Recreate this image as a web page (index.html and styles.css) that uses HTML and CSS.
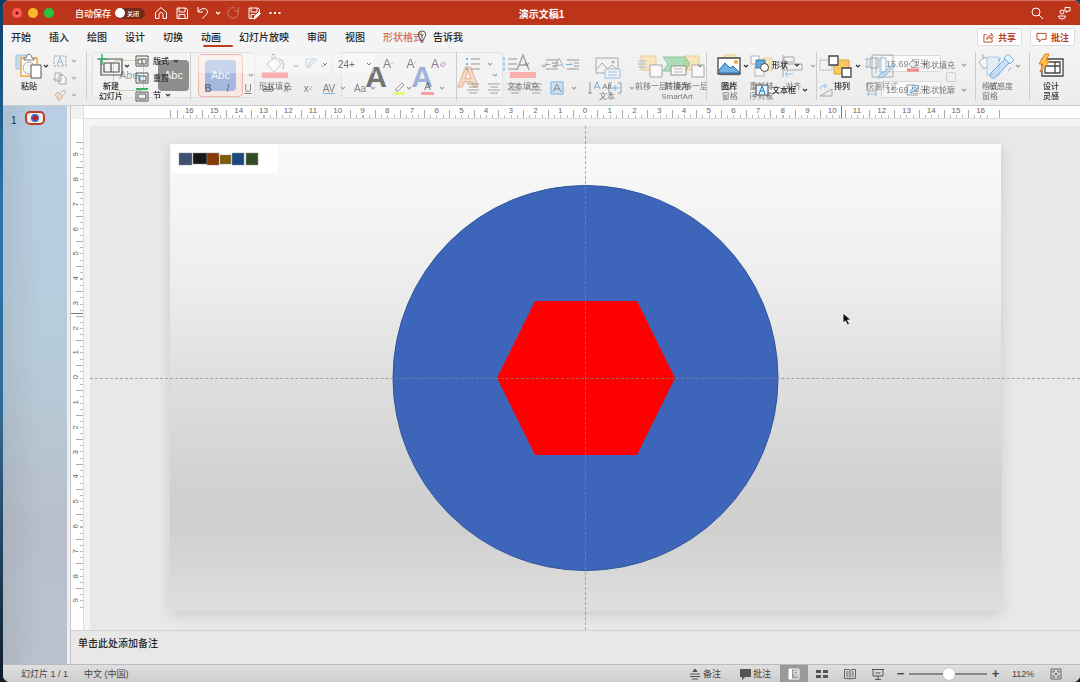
FILE: index.html
```html
<!DOCTYPE html>
<html lang="zh-CN">
<head>
<meta charset="utf-8">
<title>演示文稿1</title>
<link rel="stylesheet" href="styles.css">
</head>
<body>
<svg class="defs" aria-hidden="true">
  <symbol id="chev" viewBox="0 0 6 6"><path d="M1 2l2 2 2-2" fill="none" stroke="currentColor" stroke-width="1.2"/></symbol>
  <symbol id="lines" viewBox="0 0 14 14"><path d="M1 3h12M3 6h8M1 9h12M3 12h8" stroke="#777" fill="none"/></symbol>
  <symbol id="bucket" viewBox="0 0 28 26"><path d="M6 11l8-7 6 7-7 8zM11 7V2q1-2 3 0v5" fill="#fff" stroke="#777"/><path d="M18 6q6 1 4 10" fill="none" stroke="#6aa5d4" stroke-width="2"/><path d="M1 19h26v6H1z" fill="#ff8080"/></symbol>
</svg>
<div class="window">
  <header class="titlebar">
    <div class="lights"><button class="light red" aria-label="关闭"></button><button class="light yellow" aria-label="最小化"></button><button class="light green" aria-label="缩放"></button></div>
    <label class="autosave">自动保存 <input type="checkbox" class="hidden-check"><span class="toggle"><i></i>关闭</span></label>
    <div class="quick">
      <button aria-label="主页"><svg viewBox="0 0 14 14"><path d="M1.500 6.500L7 1.500l5.500 5v6H9V8.500a2 2 0 0 0-4 0v4H1.500z"/></svg></button>
      <button aria-label="保存"><svg viewBox="0 0 14 14"><path d="M2 2h9l1.500 1.500V12.500H2zM4 2v4h6V2M4 12.500V8.500h6v4"/></svg></button>
      <button aria-label="撤销"><svg viewBox="0 0 14 14"><path d="M2 1v5h5M2 6c3-5 10-4 9.500 0 0 2-2 3-5 6.500"/></svg></button>
      <button class="narrow" aria-label="撤销选项"><svg viewBox="0 0 6 6"><use href="#chev"/></svg></button>
      <button class="dim" aria-label="恢复"><svg viewBox="0 0 14 14"><path d="M9 2a5.300 5.300 0 1 0 3 3M12.500 1v4h-4"/></svg></button>
      <button aria-label="另存为"><svg viewBox="0 0 14 14"><path d="M7 12.500H2V2h9l1.500 1.500V6M4 2v4h6V2M4 12V8.500h4"/><path d="M7 13l1-3 4-4 1.500 1.500-4 4z" fill="#fff"/></svg></button>
      <button aria-label="更多"><svg viewBox="0 0 14 14"><path d="M1.500 7h2M6 7h2M10.500 7h2" stroke-width="2"/></svg></button>
    </div>
    <h1>演示文稿1</h1>
    <div class="quick right">
      <button aria-label="搜索"><svg viewBox="0 0 14 14"><circle cx="6" cy="6" r="4"/><path d="M9 9l4 4"/></svg></button>
      <button aria-label="共同创作"><svg viewBox="0 0 14 14"><circle cx="5" cy="6" r="2"/><path d="M1.500 10h7q0 3-3.500 3t-3.500-3zM8 1.500h5v3.500h-2L9.500 6.500V5H8z"/></svg></button>
    </div>
  </header>

  <nav class="tabs">
    <button>开始</button><button>插入</button><button>绘图</button><button>设计</button><button>切换</button><button class="active">动画</button><button>幻灯片放映</button><button>审阅</button><button>视图</button><button class="context">形状格式</button>
    <button class="tell"><svg viewBox="0 0 10 14"><path d="M3 9q-2-2-2-4a4 4 0 0 1 8 0q0 2-2 4v2H3zM3.500 13h3M5 9V6M3.500 5L5 6l1.500-1" fill="none" stroke="#444"/></svg>告诉我</button>
    <div class="tab-actions">
      <button><svg viewBox="0 0 12 12"><path d="M4 3H1v8h9V8M4 8q0-4 5-4V1.500L11.500 5 9 8V6Q6 6 4 8z"/></svg>共享</button>
      <button><svg viewBox="0 0 12 12"><path d="M1 1.500h10V8H6l-2.500 3V8H1z"/></svg>批注</button>
    </div>
  </nav>

  <section class="ribbon" aria-label="功能区">
    <div class="layer format">
      <div class="gallery shapes">
        <button class="outline">Abc</button><button class="grey">Abc</button><button class="chosen"><span>Abc</span></button>
        <svg class="chev"><use href="#chev"/></svg>
      </div>
      <div class="fill-group">
        <button class="big"><svg class="w28"><use href="#bucket"/></svg><span>形状填充</span></button>
        <svg class="chev"><use href="#chev"/></svg>
        <button class="mini" aria-label="形状轮廓"><svg viewBox="0 0 14 14"><path d="M2 3h8M2 3v8h5" fill="none" stroke="#888"/><path d="M4 10l1-3 6-5 2 2-6 5z" fill="#cfe4f5" stroke="#6aa5d4"/></svg></button>
        <svg class="chev"><use href="#chev"/></svg>
      </div>
      <div class="gallery words"><button class="k">A</button><button class="b">A</button><button class="o">A</button><svg class="chev"><use href="#chev"/></svg></div>
      <div class="fill-group text-fill">
        <button class="big"><svg class="w28" viewBox="0 0 28 26"><path d="M8 17L14 2l6 15M10.500 12h7" fill="none" stroke="#666" stroke-width="1.300"/><path d="M1 19h26v6H1z" fill="#ff8080"/></svg><span>文本填充</span></button>
        <svg class="chev"><use href="#chev"/></svg>
        <button class="mini" aria-label="文本轮廓"><svg viewBox="0 0 14 14"><path d="M2 12L7 2l5 10M4 9h6" fill="none" stroke="#888"/></svg></button>
      </div>
      <button class="big alt"><svg class="w28" viewBox="0 0 28 26"><path d="M3 5h22v15H3zM3 17l6-7 6 6 4-4 6 5" fill="#f4f4f4" stroke="#777"/><circle cx="20" cy="9" r="1.500" fill="#888"/><path d="M12 16h15v9H12z" fill="#eaf4fd" stroke="#6aa5d4"/><path d="M15 19h9M15 22h9" stroke="#6aa5d4"/></svg><span>Alt<br>文本</span></button>
      <div class="pair">
        <button class="big"><svg class="w28" viewBox="0 0 28 26"><path d="M4 3h15v14H4z" fill="#fbdc9b" stroke="#e8b75a"/><path d="M13 12h12v12H13z" fill="#fff" stroke="#777"/><path d="M1 8h8M1 11h8M1 14h8" stroke="#5b9bd5"/></svg><span>前移一层</span></button>
        <button class="big"><svg class="w28" viewBox="0 0 28 26"><path d="M6 3h15v14H6z" fill="#fbdc9b" stroke="#e8b75a"/><path d="M14 12h12v12H14z" fill="#fff" stroke="#777"/></svg><span>后移一层</span></button>
      </div>
      <div class="pair three">
        <button class="big"><svg class="w28" viewBox="0 0 28 26"><path d="M8 2h12v7H8z" fill="#fbdc9b" stroke="#e8b75a"/><path d="M5 9h18v13H5z" fill="none" stroke="#888"/><path d="M13 13l7 6h-4l-2 3z" fill="#fff" stroke="#777"/></svg><span>选择<br>窗格</span></button>
        <button class="big"><svg class="w28" viewBox="0 0 28 26"><path d="M3 3h8v8H3zM7 14h9v9H7z" fill="#fff" stroke="#888"/><path d="M15 5h9v12h-9z" fill="#fbdc9b" stroke="#e8b75a"/></svg><span>重新排<br>序对象</span></button>
        <button class="big"><svg class="w28" viewBox="0 0 28 26"><path d="M4 2v22M5 4h10v5H5zM5 11h18v6H5z" fill="none" stroke="#777"/><path d="M14 21H6m3-3l-3 3 3 3" fill="none" stroke="#5b9bd5"/></svg><span>对齐</span></button>
        <svg class="chev"><use href="#chev"/></svg>
      </div>
      <div class="stack rotate">
        <button class="mini" aria-label="组合"><svg viewBox="0 0 14 14"><path d="M1 2h12v10H1z" fill="none" stroke="#888" stroke-dasharray="2 1"/></svg></button>
        <button class="mini" aria-label="旋转"><svg viewBox="0 0 14 14"><path d="M1 13h12V6z" fill="none" stroke="#777"/><path d="M1 6q1-4 6-3M5 1l3 2-3 2" fill="none" stroke="#5b9bd5"/></svg></button>
      </div>
      <div class="sizes">
        <label><svg viewBox="0 0 14 14"><path d="M5 2h8v10H5z" fill="none" stroke="#777"/><path d="M2 2v10M0 4l2-2 2 2M0 10l2 2 2-2" fill="none" stroke="#5b9bd5"/></svg><input value="15.69 厘米" aria-label="高度"></label>
        <label><svg viewBox="0 0 14 14"><path d="M2 1h10v8H2z" fill="none" stroke="#777"/><path d="M2 12h10M4 10l-2 2 2 2M10 10l2 2-2 2" fill="none" stroke="#5b9bd5"/></svg><input value="15.69 厘米" aria-label="宽度"></label>
        <input type="checkbox" aria-label="锁定纵横比">
      </div>
      <button class="big pane"><svg class="w28" viewBox="0 0 28 26"><path d="M3 9l6-5 5 6-6 6zM7 6V1" fill="#fff" stroke="#777"/><path d="M11 4h12v18H11z" fill="#dcebf7" stroke="#79afd9"/></svg><span>格式<br>窗格</span></button>
    </div>

    <div class="layer home">
      <div class="group clipboard">
        <button class="big strong"><svg class="w28" viewBox="0 0 28 26"><path d="M1 2h12v14H1z" fill="#c4dbef" stroke="#9dc3e3"/><path d="M6 5h16v18H6z" fill="#fff" stroke="#f0a63c" stroke-width="1.500"/><path d="M9 7V5h2q1-4 3-4t3 4h2v2z" fill="#fff" stroke="#777"/><circle cx="14" cy="15" r="6" fill="#f7f7f7" stroke="#aaa"/><path d="M16 12h10v13H16z" fill="#fff" stroke="#555"/></svg><span>粘贴</span></button>
        <svg class="chev dark"><use href="#chev"/></svg>
        <div class="triple faded">
          <button><svg viewBox="0 0 14 14"><path d="M1 2h12v10H1z" fill="none" stroke="#777" stroke-dasharray="3 1"/><path d="M4 11L7 3l3 8M5 8h4" stroke="#3b91d4" fill="none"/></svg><svg class="chev"><use href="#chev"/></svg></button>
          <button><svg viewBox="0 0 14 14"><path d="M2 2h6v8H2zM6 4h4l3 3v6H6z" fill="#fff" stroke="#666"/><path d="M0 8h5" stroke="#3b91d4"/></svg><svg class="chev"><use href="#chev"/></svg></button>
          <button><svg viewBox="0 0 14 14"><path d="M2 7l3-3 5 5-4 4z" fill="#f6c69b" stroke="#b9845d"/><path d="M7 6l4-4 2 2-4 4" fill="#fff" stroke="#777"/></svg><svg class="chev"><use href="#chev"/></svg></button>
        </div>
      </div>
      <div class="group slides">
        <button class="big strong"><svg class="w28" viewBox="0 0 28 26"><path d="M4 6h21v16H4zM7 10h15v9H7zM14 10v9" fill="none" stroke="#555" stroke-width="1.200"/><path d="M5 1v11M0 6h11" stroke="#35b565" stroke-width="1.500"/></svg><span>新建<br>幻灯片</span></button>
        <svg class="chev dark"><use href="#chev"/></svg>
        <div class="triple strong">
          <button><svg viewBox="0 0 14 14"><path d="M1 2h12v10H1zM3 5h8v5H3zM7 5v5" fill="none" stroke="#555"/></svg>版式<svg class="chev"><use href="#chev"/></svg></button>
          <button><svg viewBox="0 0 14 14"><path d="M1 2h12v10H1zM4 5h7v5H4z" fill="none" stroke="#555"/><path d="M5 9V5q-4-2-4 1" fill="none" stroke="#3b91d4"/></svg>重置</button>
          <button><svg viewBox="0 0 14 14"><path d="M1 1h12" stroke="#35b565" stroke-width="2"/><path d="M1 4h12v9H1zM3 6h8v5H3z" fill="none" stroke="#555"/></svg>节<svg class="chev"><use href="#chev"/></svg></button>
        </div>
      </div>
      <div class="group font faded">
        <div class="row">
          <select class="face" aria-label="字体"><option></option></select>
          <select class="size" aria-label="字号"><option>24+</option></select>
          <button>A<sup>^</sup></button><button>A<sup>ˇ</sup></button><button class="clear">A<svg viewBox="0 0 8 8"><path d="M1 5l3-3 3 2-3 3z" fill="#efd6f6" stroke="#b264c8"/></svg></button>
        </div>
        <div class="row">
          <button><b>B</b></button><button><i>I</i></button><button><u>U</u></button><button><s>ab</s></button><button>x<sup>2</sup></button><button>x<sub>2</sub></button>
          <button class="av">AV</button><svg class="chev"><use href="#chev"/></svg><button>Aa</button><svg class="chev"><use href="#chev"/></svg>
          <button class="marker" aria-label="突出显示"><svg class="w14" viewBox="0 0 14 14"><path d="M4 8l6-6 2 2-6 6H4z" fill="#fff" stroke="#666"/><path d="M1 12.500h12" stroke="#f1f143" stroke-width="3"/></svg></button><svg class="chev"><use href="#chev"/></svg>
          <button class="color">A</button><svg class="chev"><use href="#chev"/></svg>
        </div>
      </div>
      <div class="group paragraph faded">
        <div class="row">
          <button aria-label="项目符号"><svg class="w14" viewBox="0 0 14 14"><path d="M5 2h9M5 7h9M5 12h9" stroke="#666"/><path d="M0 2h2M0 7h2M0 12h2" stroke="#3b91d4" stroke-width="2"/></svg></button><svg class="chev"><use href="#chev"/></svg>
          <button aria-label="编号"><svg class="w14" viewBox="0 0 14 14"><path d="M5 2h9M5 7h9M5 12h9" stroke="#666"/><path d="M1 0v4M1 5v4M1 10v4" stroke="#3b91d4"/></svg></button><svg class="chev"><use href="#chev"/></svg>
          <button class="indent" aria-label="减少缩进"><svg class="w14" viewBox="0 0 14 14"><path d="M1 3h12M7 6h6M7 9h6M1 12h12" stroke="#666"/><path d="M5 7.500H0l2-2" fill="none" stroke="#3b91d4"/></svg></button>
          <button aria-label="增加缩进"><svg class="w14" viewBox="0 0 14 14"><path d="M1 3h12M8 6h5M8 9h5M1 12h12" stroke="#666"/><path d="M0 7.500h6l-2-2" fill="none" stroke="#3b91d4"/></svg></button>
        </div>
        <div class="row">
          <button aria-label="左对齐"><svg class="w14"><use href="#lines"/></svg></button><button aria-label="居中"><svg class="w14"><use href="#lines"/></svg></button><button aria-label="右对齐"><svg class="w14"><use href="#lines"/></svg></button><button aria-label="两端对齐"><svg class="w14"><use href="#lines"/></svg></button>
          <button aria-label="分散对齐"><svg class="w14" viewBox="0 0 14 14"><path d="M1 1h12v12H1z" fill="#b9d9f3" stroke="#3b91d4"/><path d="M3 11l4-8 4 8M4 8h6" fill="none" stroke="#555"/></svg></button><svg class="chev"><use href="#chev"/></svg>
          <button aria-label="文字方向"><svg class="w14" viewBox="0 0 14 14"><path d="M3 1v12M1 11l2 2 2-2" fill="none" stroke="#666"/><path d="M7 8l3-7 3 7M8 6h4" fill="none" stroke="#3b91d4"/></svg></button>
          <button aria-label="对齐文本"><svg class="w14" viewBox="0 0 14 14"><path d="M4 2H1v10h3M10 2h3v10h-3" fill="none" stroke="#666"/><path d="M3 7h8M7 4v6" stroke="#3b91d4"/></svg></button><svg class="chev"><use href="#chev"/></svg>
        </div>
      </div>
      <div class="group smart faded">
        <button class="big"><svg class="w38" viewBox="0 0 38 26"><path d="M5 4h22l5 7-5 7H5l5-7z" fill="#8fd3a0" stroke="#65b67a"/><path d="M13 13h15v9H13z" fill="#fff" stroke="#666"/><path d="M16 16h9M16 19h9" stroke="#999"/></svg><span><b>转换为</b><br>SmartArt</span></button>
        <svg class="chev"><use href="#chev"/></svg>
      </div>
      <div class="group insert strong">
        <button class="big"><svg class="w28" viewBox="0 0 28 26"><path d="M3 5h22v16H3z" fill="#fff" stroke="#444" stroke-width="1.300"/><path d="M4 17l6-7 5 5 3-2 7 7H4z" fill="#72afe2" stroke="#236fae"/><circle cx="21" cy="9" r="2" fill="#f3a536"/></svg><span>图片</span></button>
        <svg class="chev dark"><use href="#chev"/></svg>
        <div class="stack">
          <button class="item"><svg viewBox="0 0 14 14"><path d="M1 2h9v8H1z" fill="#67a6d9" stroke="#3b78aa"/><circle cx="9.500" cy="9.500" r="4" fill="#fff" stroke="#444"/></svg>形状<svg class="chev"><use href="#chev"/></svg></button>
          <button class="item"><svg viewBox="0 0 14 14"><path d="M1 2h12v10H1z" fill="#e2f1fd" stroke="#444"/><path d="M4 11l3-8 3 8M5 8h4" fill="none" stroke="#167ac6"/></svg>文本框<svg class="chev"><use href="#chev"/></svg></button>
        </div>
      </div>
      <div class="group drawing">
        <button class="big strong"><svg class="w28" viewBox="0 0 28 26"><path d="M6 7h15v14H6z" fill="#f9c860" stroke="#dca23c"/><path d="M1 3h9v9H1zM14 15h9v9h-9z" fill="#fff" stroke="#444" stroke-width="1.300"/></svg><span>排列</span></button>
        <svg class="chev dark"><use href="#chev"/></svg>
        <button class="big faded"><svg class="w28" viewBox="0 0 28 26"><path d="M4 2h21v22H4z" fill="none" stroke="#777"/><path d="M8 5v16M12 5h6v14h-6z" fill="none" stroke="#3b91d4"/><path d="M10 25q1-5 5-5l10-9 1 2-8 9q-2 3-8 3z" fill="#9dc8eb" stroke="#4384b5"/></svg><span>快速样式</span></button>
        <div class="stack fade-more">
          <button class="item"><svg viewBox="0 0 14 14"><path d="M3 6l4-4 4 4-4 4z" fill="#fff" stroke="#777"/><path d="M1 12h12" stroke="#ef5757" stroke-width="3"/></svg>形状填充<svg class="chev"><use href="#chev"/></svg></button>
          <button class="item"><svg viewBox="0 0 14 14"><path d="M1 2h8M1 2v10h11" fill="none" stroke="#777"/><path d="M4 10l1-3 6-5 2 2-6 5z" fill="#d2e7f8" stroke="#3b91d4"/></svg>形状轮廓<svg class="chev"><use href="#chev"/></svg></button>
        </div>
      </div>
      <div class="group sensitivity faded">
        <button class="big"><svg class="w28" viewBox="0 0 28 26"><path d="M4 20l14-14 4 4L9 24q-4 3-6-1z" fill="#b9d9f3" stroke="#3b91d4"/><path d="M17 5l4-4 6 6-4 4zM11 8l3-3M21 18l3-3" fill="#e7f3fc" stroke="#3b91d4"/></svg><span>敏感度</span></button>
        <svg class="chev"><use href="#chev"/></svg>
      </div>
      <div class="group designer strong">
        <button class="big"><svg class="w28" viewBox="0 0 28 26"><path d="M5 6h21v17H5zM8 9h15v11H8zM18 9v11M8 13h15" fill="#fff" stroke="#444" stroke-width="1.300"/><path d="M8 1L2 11h4l-3 8L13 8H9l3-7z" fill="#ffc54c" stroke="#e87a22"/></svg><span>设计<br>灵感</span></button>
      </div>
    </div>
  </section>

  <main class="workspace">
    <aside class="thumbs"><span>1</span><button class="thumb" aria-label="幻灯片 1"><svg viewBox="0 0 14 10"><circle cx="7" cy="5" r="4" fill="#3d65b9"/><path d="M5.500 3.500h3l1 1.500-1 1.500h-3l-1-1.500z" fill="red"/></svg></button></aside>
    <section class="editor">
      <div class="corner"></div>
      <div class="hruler" id="hruler"></div>
      <div class="vruler" id="vruler"></div>
      <div class="canvas">
        <svg class="slide" viewBox="0 0 831 467" role="img" aria-label="幻灯片">
          <path d="M2 1h106v28H2z" fill="#fff"/>
          <g stroke="#8a8f9a" stroke-width=".5"><path d="M9 9h13v12H9z" fill="#40506f"/><path d="M23 9h14v11H23z" fill="#181818"/><path d="M37 9h12v12H37z" fill="#853a08"/><path d="M50 11h11v9H50z" fill="#7d5d06"/><path d="M62 9h12v12H62z" fill="#1c497d"/><path d="M76 9h12v12H76z" fill="#314d22"/></g>
          <circle cx="415.500" cy="234" r="192.500" fill="#3d66bb" stroke="#2f5597"/>
          <path d="M365 157h102l38 77-38 77H365l-38-77z" fill="#f00"/>
        </svg>
        <div class="guide horizontal"></div><div class="guide vertical"></div>
        <svg class="pointer" viewBox="0 0 10 14"><path d="M1 1v10l2.500-2 2 4 2-1-2-4H9z" fill="#111" stroke="#fff" stroke-width=".8"/></svg>
      </div>
      <div class="notes">单击此处添加备注</div>
    </section>
  </main>

  <footer class="status">
    <span>幻灯片 1 / 1</span><span>中文 (中国)</span>
    <button class="first"><svg viewBox="0 0 12 12"><path d="M1 6h10M1 8.500h10M3 11h6M4 3.500h4L6 1z" stroke="#555" fill="#555"/></svg>备注</button>
    <button class="comments"><svg viewBox="0 0 12 12"><path d="M1 1h11v8H6l-3 3V9H1z" fill="#555"/></svg>批注</button>
    <button class="view on" aria-label="普通"><svg viewBox="0 0 12 12"><path d="M1 1h10v10H1z" fill="none" stroke="#fff"/><path d="M1 1h3v10H1z" fill="#fff"/><path d="M6 3h4v3H6zM6 8h4" fill="none" stroke="#fff"/></svg></button>
    <button class="view" aria-label="幻灯片浏览"><svg viewBox="0 0 12 12"><path d="M0 2h5v3H0zM7 2h5v3H7zM0 7h5v3H0zM7 7h5v3H7z" fill="#555"/></svg></button>
    <button class="view" aria-label="阅读视图"><svg viewBox="0 0 12 12"><path d="M6 2v9M.5 1.500H5L6 2.500l1-1h4.500v9H7l-1 1-1-1H.5zM2 4h2.500M2 6h2.500M2 8h2.500M7.500 4H10M7.500 6H10M7.500 8H10" fill="none" stroke="#666"/></svg></button>
    <button class="view" aria-label="幻灯片放映"><svg viewBox="0 0 12 12"><path d="M0 1.500h12M1 2v6h10V2M3.500 5h5M6 8v3M3 11.500h6" fill="none" stroke="#555"/></svg></button>
    <button class="step">−</button><input class="zoom" type="range" min="0" max="100" value="51" aria-label="缩放"><button class="step">+</button>
    <span class="percent">112%</span>
    <button class="fit" aria-label="适应窗口"><svg viewBox="0 0 12 12"><path d="M1 1h10v10H1zM3 5V3h2M7 3h2v2M9 7v2H7M5 9H3V7M5 5l2 2M7 5L5 7" fill="none" stroke="#666"/></svg></button>
  </footer>
</div>
<script src="ruler.js"></script>
</body>
</html>
```
FILE: styles.css
```css
* { box-sizing: border-box; }
body {
  margin: 0;
  height: 100vh;
  padding-left: 3px;
  overflow: hidden;
  background: linear-gradient(#0b3f66, #2c75ab 30%, #326b98 60%, #101c2b);
  font-family: "Liberation Sans", "Noto Sans CJK SC", sans-serif;
  font-size: 10px;
  color: #262626;
}
button { border: 0; padding: 0; margin: 0; background: none; font: inherit; color: inherit; display: flex; align-items: center; white-space: nowrap; }
.defs { position: absolute; width: 0; height: 0; }
.window { height: 100%; display: flex; flex-direction: column; border-radius: 7px; overflow: hidden; background: #e8e8e8; }

.titlebar { position: relative; flex: none; height: 25px; display: flex; align-items: center; padding: 0 9px; background: #bc351a; border-top: 1px solid #d27662; color: #fff; }
.lights { display: flex; gap: 6px; }
.light { width: 10px; height: 10px; border-radius: 50%; }
.red { background: radial-gradient(#701010 0 1px, #ff5c55 2px); }
.yellow { background: #fdb72b; }
.green { background: #28c33f; }
.autosave { display: flex; align-items: center; gap: 4px; margin-left: 21px; font-size: 9px; font-weight: 500; }
.hidden-check { position: absolute; opacity: 0; }
.toggle { display: flex; align-items: center; gap: 2px; width: 30px; height: 11px; border-radius: 6px; background: #75281b; font-size: 6px; }
.toggle i { width: 10px; height: 10px; border-radius: 50%; background: #fff; }
.quick { display: flex; align-items: center; gap: 7px; margin-left: 9px; }
.quick svg { width: 14px; height: 14px; fill: none; stroke: #fff; }
.quick .narrow { width: 6px; margin: 0 -2px; }
.quick .narrow svg { width: 6px; color: #fff; stroke: none; }
.quick .dim { opacity: .35; }
.quick.right { margin-left: auto; gap: 13px; }
h1 { position: absolute; left: 50%; transform: translateX(-50%); margin: 0; font-size: 10px; font-weight: 700; }

.tabs { flex: none; height: 25px; display: flex; gap: 18px; padding: 0 5px 0 8px; background: #f4f4f4; font-weight: 500; }
.tabs > button { position: relative; height: 22px; }
.tabs .active::after { content: ""; position: absolute; left: 2px; right: -12px; bottom: 0; height: 2px; border-radius: 1px; background: #bd3b20; }
.tabs .context { color: #d4705b; }
.tabs .tell { margin-left: -24px; gap: 6px; }
.tell svg { width: 10px; height: 13px; }
.tab-actions { display: flex; gap: 8px; margin: 3px 0 0 auto; }
.tab-actions button { gap: 4px; height: 18px; padding: 0 5px; border: 1px solid #ddd; border-radius: 2px; background: #fff; color: #b83c22; font-size: 9px; font-weight: 700; }
.tab-actions svg { width: 11px; height: 11px; fill: none; stroke: #b83c22; }

.ribbon { position: relative; flex: none; height: 56px; background: linear-gradient(#f3f3f3, #ececec); border-bottom: 1px solid #ccc; font-size: 8px; overflow: hidden; }
.layer { display: grid; height: 100%; padding-top: 2px; }
.home { position: relative; grid-template-columns: 84px 104px 266px 200px 50px 110px 159px 54px 1fr; }
.format { position: absolute; inset: 0; padding-left: 89px; grid-template-columns: 164px 85px 163px 84px 47px 80px 101px 47px 113px 54px; opacity: .6; }
.group { display: flex; align-items: flex-start; position: relative; }
.group:not(:last-child)::after { content: ""; position: absolute; right: 0; top: 0; height: 48px; border-right: 1px solid #ccc; }
.group.paragraph::after { display: none; }
.big { flex-direction: column; gap: 2px; line-height: 10px; text-align: center; align-self: flex-start; }
.w28 { width: 28px; height: 28px; }
.w38 { width: 38px; height: 28px; }
.w14 { width: 14px; height: 14px; }
.chev { flex: none; width: 6px; height: 6px; color: #777; }
.group > .chev, .fill-group > .chev, .pair > .chev { margin-top: 11px; }
.chev.dark, .strong .chev { color: #333; }
.strong { font-weight: 500; color: #2b2b2b; }
.faded, .fade-more { color: #444; }
.faded > * { opacity: .55; }
.faded > .row { opacity: .65; }
.fade-more > *, .sensitivity.faded > *, .smart.faded > * { opacity: .7; }
.triple { display: flex; flex-direction: column; padding-left: 4px; }
.triple button { height: 17px; gap: 4px; }
.triple button > svg:first-child { width: 14px; height: 14px; }
.stack { display: flex; flex-direction: column; }
.stack button { height: 25px; gap: 3px; }
.item > svg:first-child, .mini svg { width: 14px; height: 14px; }
.item .chev { margin-left: 3px; }
.clipboard { padding-left: 12px; }
.slides { padding-left: 10px; }
.slides .triple { padding-left: 5px; }
.slides > .chev { margin-left: -1px; }
.insert { padding-left: 8px; }
.insert .stack { padding-left: 6px; }
.drawing { padding-left: 11px; }
.drawing > .chev { margin-left: -1px; }
.drawing .faded { padding-left: 5px; }
.drawing .stack { padding-left: 8px; }
.sensitivity { padding-left: 11px; }
.designer { padding-left: 7px; }
.smart { padding-left: 1px; }
.smart .chev { margin-left: 1px; }

.font { flex-direction: column; padding-left: 7px; font-size: 10px; }
.row { display: flex; align-items: center; height: 24px; }
.font select {
  height: 18px; border: 0; font: inherit; color: #222; appearance: none; padding: 0 4px;
  background: #fff9 url("data:image/svg+xml,%3Csvg xmlns='http://www.w3.org/2000/svg' viewBox='0 0 6 6'%3E%3Cpath d='M1 2l2 2 2-2' fill='none' stroke='%23333'/%3E%3C/svg%3E") right 2px center / 6px no-repeat;
}
.face { width: 132px; margin-right: 4px; }
.size { width: 40px; margin-right: 3px; }
.font button { width: 20px; justify-content: center; }
.font .row:first-child button { width: 23px; font-size: 12px; }
.font .row:first-child .clear { width: 16px; margin-left: 8px; }
.font sup, .font sub { font-size: 6px; color: #3b91d4; }
.font button.av { width: 22px; text-decoration: underline #3b91d4; }
.font button > svg:not(.w14) { width: 8px; height: 8px; }
.font .chev { margin-right: 4px; }
.font button.marker { width: 14px; margin-left: 12px; }
.font button.color { border-bottom: 3px solid #ff7474; width: 13px; margin: 0 5px; line-height: 11px; }
.paragraph { flex-direction: column; padding-left: 9px; }
.paragraph .row { gap: 7px; }
.paragraph .chev { margin-right: 3px; }
.paragraph .indent { margin-left: 5px; }

.gallery { height: 46px; margin-right: 1px; border: 1px solid #d8d8d8; border-radius: 2px; background: #f5f5f5; display: flex; align-items: center; }
.shapes { gap: 9px; font-size: 11px; }
.shapes button { width: 31px; height: 31px; border-radius: 4px; justify-content: center; }
.shapes .outline { margin-left: 20px; border: 1px solid #9fcb8d; color: #666; }
.shapes .grey { margin-left: 5px; background: #4d4d4d; color: #fff; }
.shapes .chosen { width: 45px; height: 43px; border: 1px solid #e88f7b; background: #fde3dd; }
.chosen span { width: 31px; height: 31px; line-height: 31px; border-radius: 4px; background: #7295d6; color: #fff; }
.shapes .chev { margin-left: -4px; }
.words { gap: 16px; padding-left: 19px; font-size: 30px; font-weight: 700; }
.words button { height: 30px; padding-top: 3px; width: 30px; justify-content: center; }
.words .k { color: #222; }
.words .b { color: #668bd0; }
.words .o { color: #f7ceb1; -webkit-text-stroke: 1px #e78c50; }
.words .chev { margin-left: -7px; }
.fill-group { display: flex; align-items: flex-start; gap: 2px; padding-left: 3px; }
.fill-group .mini { margin: 4px 0 0 3px; }
.pair { display: flex; gap: 9px; }
.alt { justify-self: start; padding-left: 5px; }
.pair .big { width: 32px; }
.three { gap: 2px; }
.rotate { padding-left: 3px; }
.sizes { position: relative; display: flex; flex-direction: column; gap: 4px; padding-left: 2px; }
.sizes label { display: flex; align-items: center; gap: 2px; height: 22px; }
.sizes label svg { width: 14px; height: 14px; }
.sizes label input { width: 60px; height: 17px; padding: 0 4px; border: 1px solid #ccc; border-radius: 2px; background: #fff; font: 9px "Liberation Sans", "Noto Sans CJK SC", sans-serif; color: #444; }
.sizes > input { position: absolute; right: 20px; top: 20px; margin: 0; width: 10px; height: 10px; appearance: none; border: 1px solid #bbb; border-radius: 2px; }
.pane { justify-self: start; }

.workspace { flex: 1; min-height: 0; display: flex; }
.thumbs { flex: none; width: 67px; display: flex; align-items: flex-start; gap: 8px; padding: 5px 0 0 8px; border-right: 3px solid #eee; background: linear-gradient(90deg, #0001, #0000 60%), linear-gradient(#b9cee4, #b7ccda 45%, #b8bfca 75%, #bac3ce); }
.thumbs span { padding-top: 4px; }
.thumb { width: 20px; height: 14px; border: 2px solid #bc4124; border-radius: 5px; background: #eee; }
.thumb svg { width: 16px; height: 10px; }
.editor { flex: 1; min-width: 0; display: grid; grid-template: 13px 1fr 34px / 13px 1fr; border-left: 1px solid #c8c8c8; }
.corner { background: #f1f1f1; border-right: 1px solid #ddd; }
.hruler, .vruler { position: relative; display: grid; background: #fff; color: #666; font-size: 8px; line-height: 9px; text-align: center; }
.hruler { grid-auto-flow: column; grid-auto-columns: minmax(0, 1fr); padding: 0 87px 0 93px; border-bottom: 1px solid #ddd; }
.hruler::before, .hruler::after { content: ""; position: absolute; top: 4px; bottom: 0; border-left: 1px solid #aaa; }
.hruler::before { left: 86px; }
.hruler::after { right: 80px; }
.hruler .here { position: absolute; left: 76%; top: 0; bottom: 0; border-left: 1px solid #777; }
.hruler span {
  background:
    linear-gradient(90deg, #aaa 1px, #0000 1px) 0 100% / 100% 8px no-repeat,
    linear-gradient(90deg, #0000 25%, #bbb 25% 29%, #0000 29% 50%, #bbb 50% 54%, #0000 54% 75%, #bbb 75% 79%, #0000 79%) 0 100% / 100% 3px no-repeat;
}
.vruler { grid-auto-rows: minmax(0, 1fr); padding: 23px 0 17px; border-right: 1px solid #ddd; }
.vruler .here { position: absolute; left: 0; right: 0; top: 38%; border-top: 1px solid #777; }
.vruler span {
  display: flex; align-items: center;
  background:
    linear-gradient(#aaa 1px, #0000 1px) 100% 0 / 7px 100% no-repeat,
    linear-gradient(#0000 25%, #bbb 25% 29%, #0000 29% 50%, #bbb 50% 54%, #0000 54% 75%, #bbb 75% 79%, #0000 79%) 100% 0 / 3px 100% no-repeat;
}
.hruler b, .vruler b { font-weight: 400; }
.vruler b { writing-mode: vertical-rl; transform: rotate(180deg); line-height: 9px; }
.canvas { position: relative; min-height: 0; border: solid #f4f4f4; border-width: 7px 0 0 6px; padding: 18px 79px 19px 80px; background: #e8e8e8; overflow: hidden; }
.slide { display: block; width: 100%; height: 100%; background: linear-gradient(#fafafa, #ededed 30%, #dfdfdf 50%, #d1d1d1 73%, #d0d0d0 83%, #dfdfdf); box-shadow: 0 3px 12px #0002; }
.guide { position: absolute; opacity: .7; }
.horizontal { left: 0; right: 0; top: 50%; border-top: 1px dashed #888; }
.vertical { top: 0; bottom: 0; left: 50%; border-left: 1px dashed #888; }
.pointer { position: absolute; left: 76%; top: 37%; width: 10px; height: 14px; }
.notes { grid-column: 1 / -1; padding: 6px 7px; border-top: 1px solid #d2d2d2; font-weight: 500; line-height: 14px; }

.status { flex: none; height: 18px; display: flex; align-items: center; padding: 0 18px; border-top: 1px solid #bbb; background: linear-gradient(#dfdfdf, #cecece); font-size: 9px; color: #444; }
.status span + span { margin-left: 16px; }
.status button { height: 100%; gap: 2px; }
.status svg { width: 12px; height: 12px; }
.status .first { margin-left: auto; }
.comments { margin-left: 18px; margin-right: 9px; }
.view { width: 28px; justify-content: center; }
.view.on { background: #999; }
.step { width: 17px; justify-content: center; font-size: 13px; font-weight: 700; }
.zoom { appearance: none; width: 78px; height: 14px; margin: 0; background: linear-gradient(#888, #888) center / 100% 2px no-repeat; }
.zoom::-webkit-slider-thumb { appearance: none; width: 12px; height: 12px; border-radius: 50%; background: #fff; box-shadow: 0 0 1px #888; }
.percent { width: 30px; margin-left: 8px; }
.fit { margin-left: 8px; }
```
FILE: ruler.js
```js
function fill(id, max) {
  const ruler = document.getElementById(id);
  for (let n = -max; n <= max; n++) {
    const cell = document.createElement('span');
    const label = document.createElement('b');
    label.textContent = Math.abs(n);
    cell.append(label);
    ruler.append(cell);
  }
  const here = document.createElement('i');
  here.className = 'here';
  ruler.append(here);
}
fill('hruler', 16);
fill('vruler', 9);
```
